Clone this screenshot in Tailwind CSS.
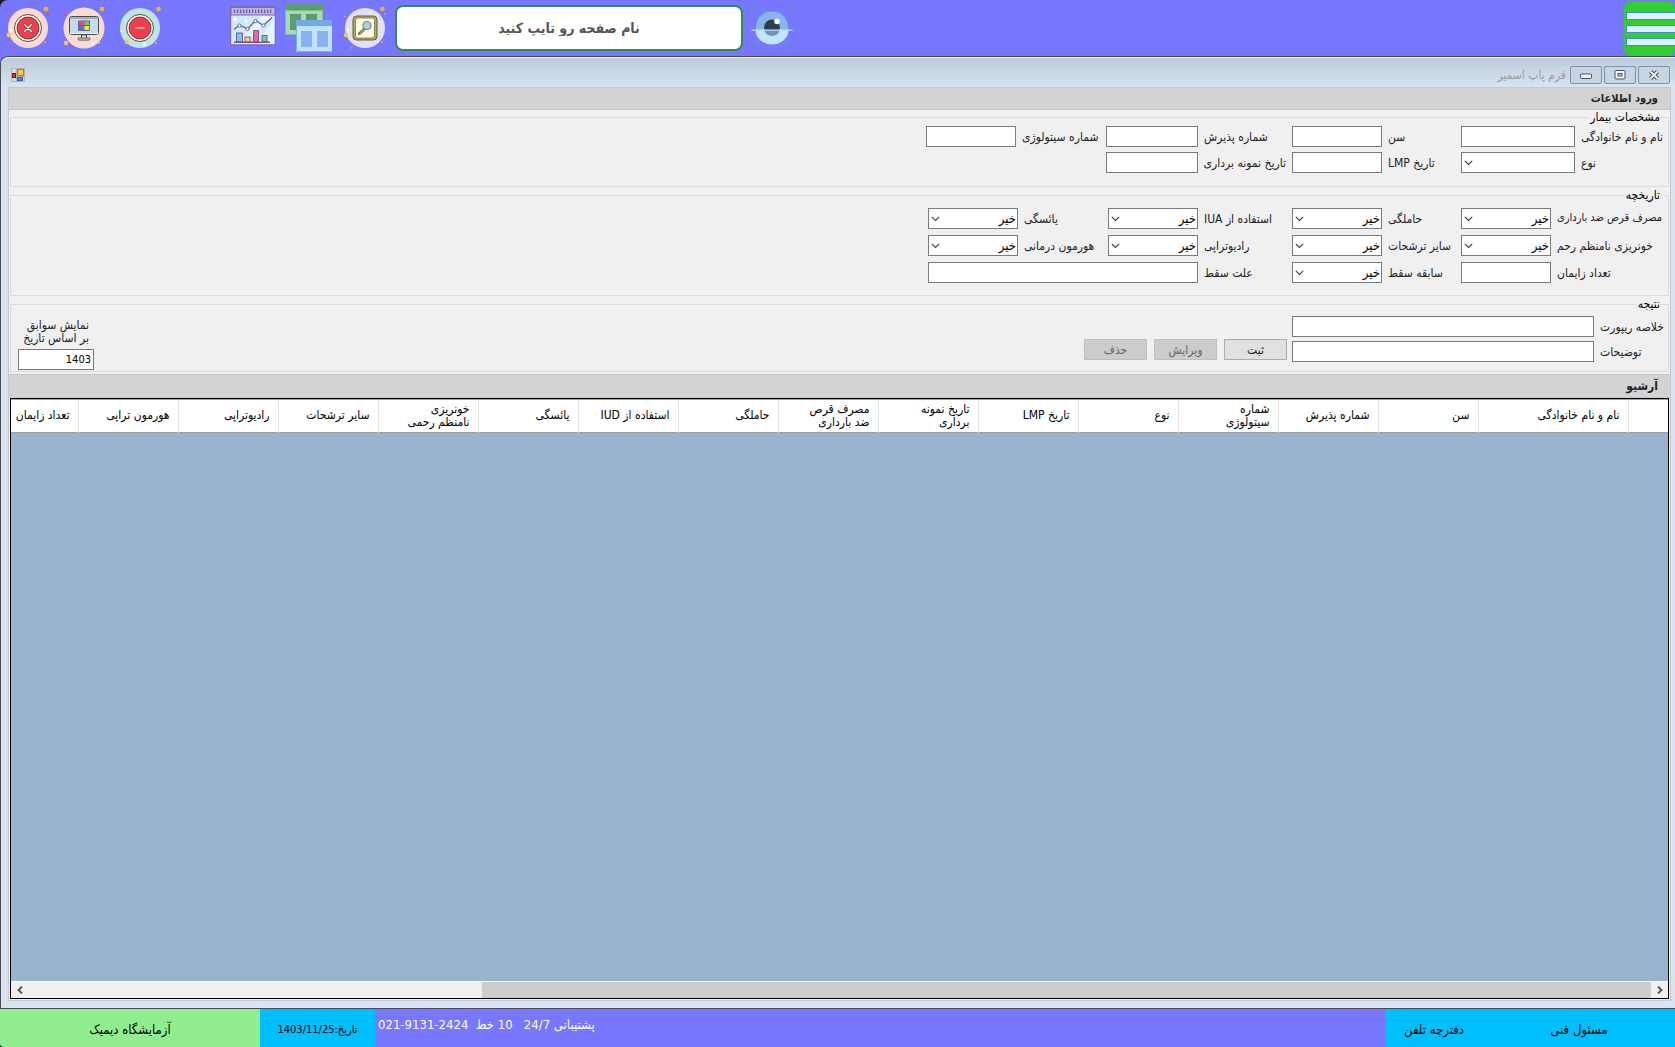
<!DOCTYPE html>
<html lang="fa" dir="rtl">

<head>
  <meta charset="UTF-8" />
  <meta name="viewport" content="width=device-width, initial-scale=1.0" />
  <title>فرم پاپ اسمیر</title>
  <script src="https://cdn.jsdelivr.net/npm/@tailwindcss/browser@4"></script>
  <style>
    body {
      font-family: 'DejaVu Sans Condensed', 'DejaVu Sans', sans-serif;
    }
  </style>
</head>

<body class="bg-[#1c1c24] text-[12px] text-[#222]">
  <div class="flex h-screen flex-col overflow-hidden rounded-tl-lg rounded-bl-sm bg-[#7878ff]">

    <!-- Barra superior -->
    <header dir="ltr" class="flex h-14 shrink-0 items-center justify-between">
      <div class="flex items-center">
        <button type="button" aria-label="بستن" class="ml-1 h-12 w-12">
          <svg viewBox="0 0 48 48" class="h-12 w-12">
            <circle cx="24" cy="24" r="20" fill="#fadbd2" />
            <circle cx="24" cy="24" r="13.5" fill="#fffbe9" stroke="#5d4a46" />
            <circle cx="24" cy="24" r="11" fill="#f23c50" stroke="#5d4a46" />
            <path d="M20.5 20.5l7 7M27.5 20.5l-7 7" stroke="#6b4038" stroke-width="2.6" stroke-linecap="round" />
            <path d="M20.5 20.5l7 7M27.5 20.5l-7 7" stroke="#fdf3dc" stroke-width="1.5" stroke-linecap="round" />
            <circle cx="42" cy="5" r="2.3" fill="#f5b51a" /><circle cx="5" cy="31" r="2.3" fill="#fdc842" /><circle cx="41" cy="38" r="1" fill="#f5b51a" />
            <circle cx="4" cy="12" r="1" fill="#f23c50" /><circle cx="44" cy="10" r="1" fill="#f23c50" /><circle cx="10.5" cy="44" r="1" fill="#f23c50" />
            <circle cx="7" cy="26" r="1.2" fill="#fff" />
          </svg>
        </button>
        <button type="button" aria-label="نمایش دسکتاپ" class="ml-2 h-12 w-12">
          <svg viewBox="0 0 48 48" class="h-12 w-12">
            <circle cx="24" cy="24" r="20.5" fill="#fadbd2" />
            <rect x="9.5" y="12.5" width="29" height="18" rx="2" fill="#c3dcf0" stroke="#4d4a52" />
            <path d="M10 14h28" stroke="#7e8791" />
            <path d="M10 29.5h28" stroke="#f7f1df" />
            <path d="M21.5 31h5v4h-5z" fill="#efe6ce" stroke="#4d4a52" />
            <rect x="18" y="34" width="12" height="2" rx="1" fill="#f7f1df" stroke="#4d4a52" />
            <path d="M19 17.5h4.500V21H19z" fill="#f0407d" /><path d="M24.500 17.500H29V21h-4.500z" fill="#7fc55d" />
            <path d="M19 22h4.500v4H19z" fill="#5a6fe0" /><path d="M24.500 22H29v4h-4.500z" fill="#ffe23c" />
            <path d="M18.500 17h11v9.500h-11zM24 17v9.500M18.500 21.500h11" fill="none" stroke="#54495e" stroke-width=".8" />
            <circle cx="42" cy="5" r="2.300" fill="#f5b51a" /><circle cx="6" cy="39" r="2.200" fill="#fdc842" /><circle cx="39" cy="38.500" r="1.200" fill="#fdc842" />
            <circle cx="4.500" cy="11" r="1" fill="#f23c50" /><circle cx="10" cy="42" r="1" fill="#f23c50" /><circle cx="33" cy="39.500" r="1.400" fill="#fff" />
          </svg>
        </button>
        <button type="button" aria-label="کوچک کردن" class="ml-2 h-12 w-12">
          <svg viewBox="0 0 48 48" class="h-12 w-12">
            <circle cx="24" cy="24" r="20" fill="#bfe5e3" />
            <circle cx="24" cy="24" r="13.5" fill="#fffbe9" stroke="#5d4a46" />
            <circle cx="24" cy="24" r="11" fill="#f23c50" stroke="#5d4a46" />
            <rect x="19" y="23" width="10" height="2" rx="1" fill="#d9b0a0" stroke="#8e6257" stroke-width=".5" />
            <circle cx="42.5" cy="5" r="2.3" fill="#f5b51a" /><circle cx="11" cy="38" r="2.2" fill="#fdc842" /><circle cx="40" cy="39" r="1.1" fill="#f5b51a" />
            <circle cx="4" cy="12.5" r="1" fill="#17a79b" /><circle cx="11.5" cy="44" r="1" fill="#17a79b" /><circle cx="28.5" cy="40.5" r="1.5" fill="#fff" />
            <circle cx="5.5" cy="27" r="1" fill="#fff" />
          </svg>
        </button>
        <button type="button" aria-label="آمار" class="ml-16 h-12 w-12">
          <svg viewBox="0 0 48 48" class="h-12 w-12">
            <rect x="2.5" y="3" width="45" height="38" rx="1.5" fill="#cfeafb" stroke="#8268a8" stroke-width="1.4" />
            <path d="M28 40L46 16v24zM8 40L34 12h8L18 40z" fill="#e4f5fd" />
            <path d="M3 3.500h44V11H3z" fill="#b9b4e8" stroke="#8268a8" />
            <path d="M6 7.300h38" stroke="#6f5a9c" stroke-width="3.500" stroke-dasharray="1.200 1.800" />
            <path d="M6 25.500l5.500-4.500 8 4 8-8.500 8 5 8.500-8" fill="none" stroke="#77659f" stroke-width="1.400" />
            <circle cx="11.500" cy="21.500" r="1.600" fill="#fff" stroke="#77659f" /><circle cx="19.500" cy="25" r="1.600" fill="#fff" stroke="#77659f" />
            <circle cx="27.500" cy="17" r="1.600" fill="#fff" stroke="#77659f" /><circle cx="35.500" cy="21.500" r="1.600" fill="#fff" stroke="#77659f" />
            <g stroke="#77558f"><path d="M8.500 29h6v9h-6z" fill="#6fc9f5" /><path d="M17 33h5v5h-5z" fill="#fbdb6c" /><path d="M25.500 26.500h5V38h-5z" fill="#f0669a" /><path d="M34 31.500h5V38h-5z" fill="#73c9ab" /><path d="M6 38.300h36" stroke-width="1.400" /></g>
            <path d="M7 13v5M4.500 15.500h5M40 12v4M38 14h4M18 15.500v3M16.500 17h3" stroke="#fff" stroke-width="1.200" />
          </svg>
        </button>
        <button type="button" aria-label="پنجره ها" class="ml-2 h-12 w-12">
          <svg viewBox="0 0 48 48" class="h-12 w-12">
            <path d="M1 0h38v31H1z" fill="#a9d9ae" /><path d="M1 0h38v6H1z" fill="#5b9b76" />
            <path d="M6 10h11v16H6zM22 10h11v8H22z" fill="#5b9b76" /><path d="M1.500 6.500h37v24h-37z" fill="none" stroke="#7fbd92" />
            <path d="M12 16h36v32H12z" fill="#c0e4ff" /><path d="M12 16h36v6H12z" fill="#75a8e8" />
            <path d="M17 27h11v16H17zM33 27h11v16H33z" fill="#8ab2ee" /><path d="M12.500 16.500V47.500H48" fill="none" stroke="#73b1e2" />
          </svg>
        </button>
        <button type="button" aria-label="جستجو" class="ml-2 h-12 w-12">
          <svg viewBox="0 0 48 48" class="h-12 w-12">
            <circle cx="25" cy="24" r="20" fill="#e2e1f7" />
            <rect x="13" y="12" width="24" height="24" rx="3.500" fill="#b3ad55" stroke="#5f5d35" />
            <rect x="15.500" y="14" width="19" height="20" rx="2" fill="#fffbe9" stroke="#77743f" stroke-width=".8" />
            <path d="M24.500 25l-5 4.500" stroke="#5e6a45" stroke-width="3" stroke-linecap="round" />
            <path d="M24 25.500l-4 3.500" stroke="#a3b665" stroke-width="1.200" stroke-linecap="round" />
            <circle cx="27" cy="21.500" r="4" fill="#a1d9d9" stroke="#737f83" stroke-width="1.200" />
            <circle cx="42.500" cy="5" r="2.300" fill="#f5b51a" /><circle cx="6" cy="31" r="2.200" fill="#fdc842" /><circle cx="42" cy="38" r="1" fill="#f5b51a" />
            <circle cx="5" cy="12.500" r="1" fill="#a6a0c8" /><circle cx="45" cy="10" r="1" fill="#a6a0c8" /><circle cx="11.500" cy="44" r="1" fill="#a6a0c8" /><circle cx="8" cy="26" r="1.300" fill="#fff" />
          </svg>
        </button>
        <input type="text" dir="rtl" aria-label="نام صفحه" placeholder="نام صفحه رو تایپ کنید" class="ml-[7px] h-[46px] w-[348px] rounded-lg border-2 border-[#2e8b57] bg-white text-center text-[14px] font-bold placeholder:text-[#555]" />
        <button type="button" aria-label="نمایش" class="ml-1 h-12 w-12">
          <svg viewBox="0 0 48 48" class="h-12 w-12">
            <path d="M5 10V4h6M39 4h6v6M5 37v6h6M45 37v6h-6" fill="none" stroke="#6c7fc4" stroke-width="1.500" />
            <circle cx="25" cy="23.500" r="16.500" fill="#8ab4f0" stroke="#5c8fd0" stroke-width=".8" />
            <path d="M8.500 26a16.500 14.500 0 0 0 33 0z" fill="#c0e6ff" />
            <circle cx="25" cy="23.500" r="8" fill="#2f3e4e" /><path d="M17.300 26a8 8 0 0 0 15.400 0z" fill="#6f93bf" />
            <circle cx="30" cy="17.500" r="2.800" fill="#fff" /><path d="M4.500 26.200h41" stroke="#c0e6ff" stroke-width="1.200" />
          </svg>
        </button>
      </div>
      <button type="button" aria-label="منو" class="flex h-[55px] w-[51px] flex-col justify-center gap-[5px] rounded-lg bg-[#32cd32] pt-[2px] pl-[2px]">
        <span class="h-[8px] w-full border border-r-0 border-[#3f8fc4] bg-[#ddf0ff]"></span>
        <span class="h-[8px] w-full border border-r-0 border-[#3f8fc4] bg-[#ddf0ff]"></span>
        <span class="h-[8px] w-full border border-r-0 border-[#3f8fc4] bg-[#ddf0ff]"></span>
      </button>
    </header>

    <!-- Ventana del formulario -->
    <main class="flex min-h-0 flex-1 flex-col rounded-tl-lg border-y border-l border-[#4a4a52] bg-[#d7e4f2] pr-[4px] pb-[7px] pl-[7px]">
      <div class="-mr-[4px] -ml-[7px] flex h-[30px] shrink-0 items-center gap-[4px] rounded-tl-lg border-t border-[#eef3f8] bg-linear-to-b from-[#bdcbda] to-[#d7e4f2] pt-[4px] pr-[5px] pl-[10px]">
        <div class="flex gap-[2px]">
          <button type="button" aria-label="بستن پنجره" class="flex h-[18px] w-8 items-center justify-center rounded-xs border border-[#8390aa] bg-[#c6d4e4]">
            <svg viewBox="0 0 12 10" class="h-[10px] w-3"><path d="M2.500 1.500l7 7M9.500 1.500l-7 7" stroke="#4c5266" stroke-width="4" /><path d="M2.500 1.500l7 7M9.500 1.500l-7 7" stroke="#f4f4f4" stroke-width="1.800" /></svg>
          </button>
          <button type="button" aria-label="بزرگ کردن پنجره" class="flex h-[18px] w-8 items-center justify-center rounded-xs border border-[#8390aa] bg-[#c6d4e4]">
            <svg viewBox="0 0 12 10" class="h-[10px] w-3"><rect x="1" y=".5" width="10" height="8.500" rx="1" fill="#f4f4f4" stroke="#4c5266" /><rect x="4" y="3.500" width="4" height="2.500" fill="#c6d4e4" stroke="#4c5266" /></svg>
          </button>
          <button type="button" aria-label="کوچک کردن پنجره" class="flex h-[18px] w-8 items-center justify-center rounded-xs border border-[#8390aa] bg-[#c6d4e4]">
            <svg viewBox="0 0 12 10" class="h-[10px] w-3"><rect x=".5" y="4" width="11" height="4.500" rx="1" fill="#f4f4f4" stroke="#4c5266" /></svg>
          </button>
        </div>
        <h1 class="flex-1 text-[12px] text-[#9c9ca4]">فرم پاپ اسمیر</h1>
        <svg viewBox="0 0 14 14" class="h-[14px] w-[14px]">
          <path d="M.5.5h13v13H.5zM5.500.500v13M.500 8.500h13" fill="#d5dae0" stroke="#b4b4b4" />
          <rect x="6.500" y="1.500" width="6" height="6" fill="#fccb3c" stroke="#b07d08" /><rect x="1.500" y="5.500" width="3" height="4" fill="#d83a22" stroke="#8f0c04" /><rect x="6.500" y="9.500" width="5" height="3" fill="#4f87e0" stroke="#3060c4" />
        </svg>
      </div>

      <div class="flex min-h-0 flex-1 flex-col border border-[#c8c8c8] bg-[#f0f0f0]">
        <h2 class="h-[22px] shrink-0 border-b border-[#c8c8c8] bg-[#d3d3d3] pr-3 text-[11px] leading-[22px] font-bold">ورود اطلاعات</h2>

        <form class="shrink-0 px-px">
          <fieldset class="border border-[#dcdcdc] pt-[2px] pr-[3px] pb-[13px]">
            <legend class="mr-[4px] px-px leading-[14px] text-black">مشخصات بیمار</legend>
            <div class="grid grid-cols-[84px_114px_67px_90px_82px_92px_78px_90px] items-center gap-x-[6px] gap-y-[5px] text-left whitespace-nowrap">
              <label for="name">نام و نام خانوادگی</label>
              <input id="name" type="text" class="h-[21px] w-full border border-[#7a7a7a] bg-white px-1" />
              <label for="age">سن</label>
              <input id="age" type="text" class="h-[21px] w-full border border-[#7a7a7a] bg-white px-1" />
              <label for="admit">شماره پذیرش</label>
              <input id="admit" type="text" class="h-[21px] w-full border border-[#7a7a7a] bg-white px-1" />
              <label for="cyto">شماره سیتولوژی</label>
              <input id="cyto" type="text" class="h-[21px] w-full border border-[#7a7a7a] bg-white px-1" />
              <label for="kind">نوع</label>
              <div class="relative h-[21px]">
                <select id="kind" class="h-full w-full appearance-none border border-[#7a7a7a] bg-white px-1"><option></option></select>
                <svg viewBox="0 0 9 6" class="pointer-events-none absolute top-2 left-[3px] h-[6px] w-[9px]"><path d="M.8.8l3.700 3.700L8.200.8" fill="none" stroke="#444" stroke-width="1.200" /></svg>
              </div>
              <label for="lmp">تاریخ LMP</label>
              <input id="lmp" type="text" class="h-[21px] w-full border border-[#7a7a7a] bg-white px-1" />
              <label for="sampled">تاریخ نمونه برداری</label>
              <input id="sampled" type="text" class="h-[21px] w-full border border-[#7a7a7a] bg-white px-1" />
            </div>
          </fieldset>

          <fieldset class="mt-px border border-[#dcdcdc] pt-[6px] pr-[3px] pb-[12px]">
            <legend class="mr-[4px] px-px leading-[14px] text-black">تاریخچه</legend>
            <div class="grid grid-cols-[108px_90px_67px_90px_82px_90px_78px_90px] items-center gap-x-[6px] gap-y-[6px] text-left whitespace-nowrap">
              <label for="pill" class="text-[11px]">مصرف قرص ضد بارداری</label>
              <div class="relative h-[21px]">
                <select id="pill" class="h-full w-full appearance-none border border-[#7a7a7a] bg-white px-px text-[13px] leading-[19px] text-black"><option>خیر</option><option>بله</option></select>
                <svg viewBox="0 0 9 6" class="pointer-events-none absolute top-2 left-[3px] h-[6px] w-[9px]"><path d="M.8.8l3.700 3.700L8.200.8" fill="none" stroke="#444" stroke-width="1.200" /></svg>
              </div>
              <label for="pregnant">حاملگی</label>
              <div class="relative h-[21px]">
                <select id="pregnant" class="h-full w-full appearance-none border border-[#7a7a7a] bg-white px-px text-[13px] leading-[19px] text-black"><option>خیر</option><option>بله</option></select>
                <svg viewBox="0 0 9 6" class="pointer-events-none absolute top-2 left-[3px] h-[6px] w-[9px]"><path d="M.8.8l3.700 3.700L8.200.8" fill="none" stroke="#444" stroke-width="1.200" /></svg>
              </div>
              <label for="iua">استفاده از IUA</label>
              <div class="relative h-[21px]">
                <select id="iua" class="h-full w-full appearance-none border border-[#7a7a7a] bg-white px-px text-[13px] leading-[19px] text-black"><option>خیر</option><option>بله</option></select>
                <svg viewBox="0 0 9 6" class="pointer-events-none absolute top-2 left-[3px] h-[6px] w-[9px]"><path d="M.8.8l3.700 3.700L8.200.8" fill="none" stroke="#444" stroke-width="1.200" /></svg>
              </div>
              <label for="menopause">یائسگی</label>
              <div class="relative h-[21px]">
                <select id="menopause" class="h-full w-full appearance-none border border-[#7a7a7a] bg-white px-px text-[13px] leading-[19px] text-black"><option>خیر</option><option>بله</option></select>
                <svg viewBox="0 0 9 6" class="pointer-events-none absolute top-2 left-[3px] h-[6px] w-[9px]"><path d="M.8.8l3.700 3.700L8.200.8" fill="none" stroke="#444" stroke-width="1.200" /></svg>
              </div>

              <label for="bleeding">خونریزی نامنظم رحم</label>
              <div class="relative h-[21px]">
                <select id="bleeding" class="h-full w-full appearance-none border border-[#7a7a7a] bg-white px-px text-[13px] leading-[19px] text-black"><option>خیر</option><option>بله</option></select>
                <svg viewBox="0 0 9 6" class="pointer-events-none absolute top-2 left-[3px] h-[6px] w-[9px]"><path d="M.8.8l3.700 3.700L8.200.8" fill="none" stroke="#444" stroke-width="1.200" /></svg>
              </div>
              <label for="discharge">سایر ترشحات</label>
              <div class="relative h-[21px]">
                <select id="discharge" class="h-full w-full appearance-none border border-[#7a7a7a] bg-white px-px text-[13px] leading-[19px] text-black"><option>خیر</option><option>بله</option></select>
                <svg viewBox="0 0 9 6" class="pointer-events-none absolute top-2 left-[3px] h-[6px] w-[9px]"><path d="M.8.8l3.700 3.700L8.200.8" fill="none" stroke="#444" stroke-width="1.200" /></svg>
              </div>
              <label for="radio">رادیوتراپی</label>
              <div class="relative h-[21px]">
                <select id="radio" class="h-full w-full appearance-none border border-[#7a7a7a] bg-white px-px text-[13px] leading-[19px] text-black"><option>خیر</option><option>بله</option></select>
                <svg viewBox="0 0 9 6" class="pointer-events-none absolute top-2 left-[3px] h-[6px] w-[9px]"><path d="M.8.8l3.700 3.700L8.200.8" fill="none" stroke="#444" stroke-width="1.200" /></svg>
              </div>
              <label for="hormone">هورمون درمانی</label>
              <div class="relative h-[21px]">
                <select id="hormone" class="h-full w-full appearance-none border border-[#7a7a7a] bg-white px-px text-[13px] leading-[19px] text-black"><option>خیر</option><option>بله</option></select>
                <svg viewBox="0 0 9 6" class="pointer-events-none absolute top-2 left-[3px] h-[6px] w-[9px]"><path d="M.8.8l3.700 3.700L8.200.8" fill="none" stroke="#444" stroke-width="1.200" /></svg>
              </div>

              <label for="births">تعداد زایمان</label>
              <input id="births" type="text" class="h-[21px] w-full border border-[#7a7a7a] bg-white px-1" />
              <label for="abortion">سابقه سقط</label>
              <div class="relative h-[21px]">
                <select id="abortion" class="h-full w-full appearance-none border border-[#7a7a7a] bg-white px-px text-[13px] leading-[19px] text-black"><option>خیر</option><option>بله</option></select>
                <svg viewBox="0 0 9 6" class="pointer-events-none absolute top-2 left-[3px] h-[6px] w-[9px]"><path d="M.8.8l3.700 3.700L8.200.8" fill="none" stroke="#444" stroke-width="1.200" /></svg>
              </div>
              <label for="cause">علت سقط</label>
              <input id="cause" type="text" class="col-span-3 h-[21px] w-full border border-[#7a7a7a] bg-white px-1" />
            </div>
          </fieldset>

          <fieldset class="mt-px border border-[#dcdcdc]">
            <legend class="mr-[7px] px-px leading-[14px] text-black">نتیجه</legend>
            <div class="flex h-[60px] items-end justify-between pr-[4px] pl-[7px]">
              <div class="flex items-end gap-[5px] pb-[9px]">
                <div class="grid grid-cols-[64px_302px] items-center gap-x-[6px] gap-y-[4px] text-left whitespace-nowrap">
                  <label for="summary">خلاصه ریپورت</label>
                  <input id="summary" type="text" class="h-[21px] w-full border border-[#7a7a7a] bg-white px-1" />
                  <label for="notes">توضیحات</label>
                  <input id="notes" type="text" class="h-[21px] w-full border border-[#7a7a7a] bg-white px-1" />
                </div>
                <div class="flex gap-[7px] pb-[2px]">
                  <button type="button" class="h-[21px] w-[63px] border border-[#adadad] bg-[#e1e1e1]">ثبت</button>
                  <button type="button" disabled class="h-[21px] w-[63px] border border-[#bfbfbf] bg-[#cccccc] text-[#666]">ویرایش</button>
                  <button type="button" disabled class="h-[21px] w-[63px] border border-[#bfbfbf] bg-[#cccccc] text-[#666]">حذف</button>
                </div>
              </div>
              <div class="flex w-[76px] flex-col gap-[4px] pb-px">
                <label for="year" class="pr-[5px] leading-[13px] whitespace-nowrap">نمایش سوابق<br />بر اساس تاریخ</label>
                <input id="year" type="text" value="1403" class="h-[21px] w-full border border-[#7a7a7a] bg-white px-[2px] text-[11px] text-black" />
              </div>
            </div>
          </fieldset>
        </form>

        <h2 class="mt-[2px] h-[24px] shrink-0 border-y border-[#c8c8c8] bg-[#d3d3d3] pr-3 text-[12px] leading-[22px] font-bold">آرشیو</h2>

        <div class="mx-px mb-px flex min-h-0 flex-1 flex-col border border-black bg-[#99b4d1]">
          <div class="min-h-0 flex-1 overflow-hidden border-t border-[#a0a0a0]">
            <table class="w-[1790px] table-fixed border-collapse bg-white text-right leading-[13px] text-black">
              <thead>
                <tr class="h-[32px] border-b border-[#a0a0a0] [&>th]:border-l [&>th]:border-[#e5e5e5] [&>th]:p-0 [&>th]:pr-[8px] [&>th]:font-normal">
                  <th class="w-[40px]"></th>
                  <th class="w-[150px]">نام و نام خانوادگی</th>
                  <th class="w-[100px]">سن</th>
                  <th class="w-[100px]">شماره پذیرش</th>
                  <th class="w-[100px]">شماره<br />سیتولوژی</th>
                  <th class="w-[100px]">نوع</th>
                  <th class="w-[100px]">تاریخ LMP</th>
                  <th class="w-[100px]">تاریخ نمونه<br />برداری</th>
                  <th class="w-[100px]">مصرف قرص<br />ضد بارداری</th>
                  <th class="w-[100px]">حاملگی</th>
                  <th class="w-[100px]">استفاده از IUD</th>
                  <th class="w-[100px]">یائسگی</th>
                  <th class="w-[100px]">خونریزی<br />نامنظم رحمی</th>
                  <th class="w-[100px]">سایر ترشحات</th>
                  <th class="w-[100px]">رادیوتراپی</th>
                  <th class="w-[100px]">هورمون تراپی</th>
                  <th class="w-[100px]">تعداد زایمان</th>
                  <th class="w-[100px]"></th>
                </tr>
              </thead>
            </table>
          </div>
          <!-- Barra de desplazamiento -->
          <div class="flex h-[17px] shrink-0 border-t border-white bg-[#f0f0f0]">
            <button type="button" aria-label="راست" class="flex w-[17px] items-center justify-center"><svg viewBox="0 0 6 8" class="h-2 w-[6px]"><path d="M1 .5L4.500 4 1 7.500" fill="none" stroke="#505050" stroke-width="1.800" /></svg></button>
            <div class="flex-1"><div class="h-full w-[72%] bg-[#cdcdcd]"></div></div>
            <button type="button" aria-label="چپ" class="flex w-[17px] items-center justify-center"><svg viewBox="0 0 6 8" class="h-2 w-[6px]"><path d="M5 .5L1.500 4 5 7.500" fill="none" stroke="#505050" stroke-width="1.800" /></svg></button>
          </div>
        </div>
      </div>
    </main>

    <!-- Barra inferior -->
    <footer class="flex h-[38px] shrink-0 items-stretch text-[13px] text-black">
      <button type="button" class="w-[192px] bg-[#00bfff] pt-1">مسئول فنی</button>
      <button type="button" class="w-[98px] bg-[#00bfff] pt-1">دفترچه تلفن</button>
      <p class="flex-1 pt-[7px] pl-[3px] text-left text-[13px] leading-[18px] whitespace-pre text-white">پشتیبانی 24/7   10 خط  2424-9131-021</p>
      <p class="flex w-[115px] items-center justify-center bg-[#00bfff] pt-1 text-[11px]">تاریخ:1403/11/25</p>
      <p class="flex w-[260px] items-center justify-center bg-[#90ee90] pt-1">آزمایشگاه دیمیک</p>
    </footer>
  </div>
</body>

</html>
